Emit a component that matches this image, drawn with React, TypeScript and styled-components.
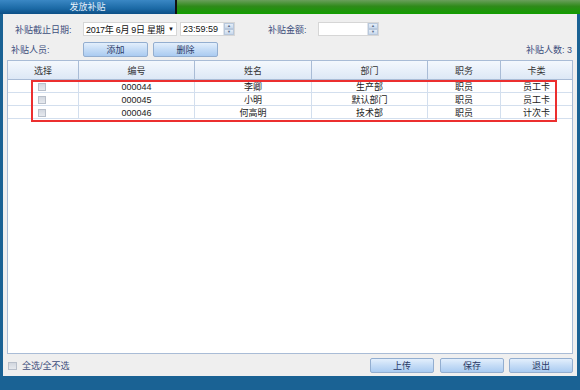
import React from "react";
import styled, { createGlobalStyle } from "styled-components";

const Global = createGlobalStyle`
  html, body { margin: 0; padding: 0; background: #1a6294; }
  body { width: 580px; height: 390px; overflow: hidden; font-family: "Liberation Sans", "Noto Sans CJK SC", sans-serif; }
  * { box-sizing: border-box; }
`;

const Window = styled.div`
  width: 580px;
  height: 390px;
  display: flex;
  flex-direction: column;
  background: #1a6294;
`;

const TitleBar = styled.div`
  height: 14px;
  display: flex;
`;

const TitleTab = styled.div`
  width: 175px;
  background: linear-gradient(#3a87c4, #1c6aa6 60%, #0d4f86);
  color: #e8f1fb;
  font-size: 9px;
  line-height: 14px;
  text-align: center;
`;

const TitleSep = styled.div`
  width: 2px;
  background: #111;
`;

const TitleGreen = styled.div`
  flex: 1;
  background: linear-gradient(#6a9f5c, #2f8a1a 45%, #129d00);
`;

const Body = styled.div`
  flex: 1;
  margin: 0 3px;
  background: #efefef;
  display: flex;
  flex-direction: column;
  padding: 8px 4px 3px 4px;
`;

const Row = styled.div<{ $h: number; $mt?: number }>`
  height: ${(p) => p.$h}px;
  margin-top: ${(p) => p.$mt ?? 0}px;
  display: flex;
  align-items: center;
  font-size: 9px;
  color: #3d4e7c;
`;

const Label = styled.div<{ $w: number; $pl: number }>`
  width: ${(p) => p.$w}px;
  flex-shrink: 0;
  padding-left: ${(p) => p.$pl}px;
  white-space: nowrap;
`;

const InputBox = styled.div<{ $w: number; $ml?: number }>`
  width: ${(p) => p.$w}px;
  flex-shrink: 0;
  margin-left: ${(p) => p.$ml ?? 0}px;
  height: 14px;
  background: #fff;
  border: 1px solid #d6d6d6;
  display: flex;
  align-items: center;
  font-size: 9px;
  color: #111;
  padding-left: 2px;
  white-space: nowrap;
`;

const InputText = styled.span<{ $tight?: boolean }>`
  flex: 1;
  min-width: 0;
  overflow: hidden;
  letter-spacing: ${(p) => (p.$tight ? "-0.3px" : "0")};
`;

const Arrow = styled.span`
  flex-shrink: 0;
  font-size: 6px;
  margin: 0 2px 0 1px;
  color: #111;
`;

const Spinner = styled.div`
  width: 11px;
  height: 12px;
  flex-shrink: 0;
  display: flex;
  flex-direction: column;
  border-left: 1px solid #e0e4ea;
`;

const SpinHalf = styled.div`
  flex: 1;
  background: linear-gradient(#e6eef8, #c8d8ec);
  border: 1px solid #b8c8dc;
  display: flex;
  align-items: center;
  justify-content: center;
  font-size: 4px;
  color: #5a6c88;
  line-height: 1;
`;

const Spacer = styled.div`
  flex: 1;
`;

const Button = styled.div<{ $w: number; $ml?: number }>`
  width: ${(p) => p.$w}px;
  flex-shrink: 0;
  margin-left: ${(p) => p.$ml ?? 0}px;
  height: 15px;
  border: 1px solid #93aed0;
  border-radius: 2px;
  background: linear-gradient(#e3effc, #c5dcf6 50%, #aacbf1);
  color: #2a3a66;
  font-size: 9px;
  display: flex;
  align-items: center;
  justify-content: center;
`;

const Count = styled.div`
  margin-right: 1px;
  white-space: nowrap;
`;

const Table = styled.div`
  position: relative;
  flex: 1;
  margin-top: 3px;
  background: #fff;
  border: 1px solid #a9bcd6;
  font-size: 9px;
  color: #222;
`;

const cols = "71px 116px 117px 116px 73px 1fr";

const HeaderRow = styled.div`
  display: grid;
  grid-template-columns: ${cols};
  height: 19px;
  background: linear-gradient(#f4f8fd, #dde8f6);
  border-bottom: 1px solid #a9bcd6;
`;

const HeadCell = styled.div<{ $last?: boolean }>`
  display: flex;
  align-items: center;
  justify-content: center;
  border-right: ${(p) => (p.$last ? "none" : "1px solid #a9bcd6")};
  color: #333;
`;

const DataRow = styled.div`
  display: grid;
  grid-template-columns: ${cols};
  height: 13px;
  border-bottom: 1px solid #d3dfee;
`;

const Cell = styled.div<{ $last?: boolean }>`
  display: flex;
  align-items: center;
  justify-content: center;
  border-right: ${(p) => (p.$last ? "none" : "1px solid #d3dfee")};
  white-space: nowrap;
`;

const CheckCell = styled(Cell)`
  justify-content: flex-start;
  padding-left: 30px;
`;

const Check = styled.div`
  width: 8px;
  height: 8px;
  border: 1px solid #b8bfca;
  background: linear-gradient(#d2d7df, #e6e9ee);
`;

const Highlight = styled.div`
  position: absolute;
  left: 23px;
  top: 19px;
  width: 526px;
  height: 42px;
  border: 2px solid #ec2f2f;
  pointer-events: none;
`;

const BottomCheck = styled.div`
  width: 9px;
  height: 8px;
  margin-left: 1px;
  border: 1px solid #b8bfca;
  background: linear-gradient(#d2d7df, #e6e9ee);
`;

const BottomLabel = styled.div`
  margin-left: 5px;
  font-size: 9px;
  color: #3d4e7c;
`;

const FooterBar = styled.div`
  height: 14px;
  background: #1a6294;
`;

const rows = [
  ["000044", "李卿", "生产部", "职员", "员工卡"],
  ["000045", "小明", "默认部门", "职员", "员工卡"],
  ["000046", "何高明", "技术部", "职员", "计次卡"],
];

const heads = ["选择", "编号", "姓名", "部门", "职务", "卡类"];

export default function App() {
  return (
    <Window>
      <Global />
      <TitleBar>
        <TitleTab>发放补贴</TitleTab>
        <TitleSep />
        <TitleGreen />
      </TitleBar>
      <Body>
        <Row $h={14}>
          <Label $w={76} $pl={8}>补贴截止日期:</Label>
          <InputBox $w={94}>
            <InputText $tight>2017年 6月 9日 星期</InputText>
            <Arrow>▼</Arrow>
          </InputBox>
          <InputBox $w={55} $ml={3}>
            <InputText>23:59:59</InputText>
            <Spinner>
              <SpinHalf>▲</SpinHalf>
              <SpinHalf>▼</SpinHalf>
            </Spinner>
          </InputBox>
          <Label $w={83} $pl={33}>补贴金额:</Label>
          <InputBox $w={61}>
            <InputText />
            <Spinner>
              <SpinHalf>▲</SpinHalf>
              <SpinHalf>▼</SpinHalf>
            </Spinner>
          </InputBox>
        </Row>
        <Row $h={15} $mt={6}>
          <Label $w={76} $pl={4}>补贴人员:</Label>
          <Button $w={65}>添加</Button>
          <Button $w={65} $ml={5}>删除</Button>
          <Spacer />
          <Count>补贴人数: 3</Count>
        </Row>
        <Table>
          <HeaderRow>
            {heads.map((h, i) => (
              <HeadCell key={h} $last={i === heads.length - 1}>{h}</HeadCell>
            ))}
          </HeaderRow>
          {rows.map((r) => (
            <DataRow key={r[0]}>
              <CheckCell><Check /></CheckCell>
              {r.map((c, i) => (
                <Cell key={i} $last={i === r.length - 1}>{c}</Cell>
              ))}
            </DataRow>
          ))}
          <Highlight />
        </Table>
        <Row $h={15} $mt={4}>
          <BottomCheck />
          <BottomLabel>全选/全不选</BottomLabel>
          <Spacer />
          <Button $w={64}>上传</Button>
          <Button $w={64} $ml={6}>保存</Button>
          <Button $w={64} $ml={5}>退出</Button>
        </Row>
      </Body>
      <FooterBar />
    </Window>
  );
}
